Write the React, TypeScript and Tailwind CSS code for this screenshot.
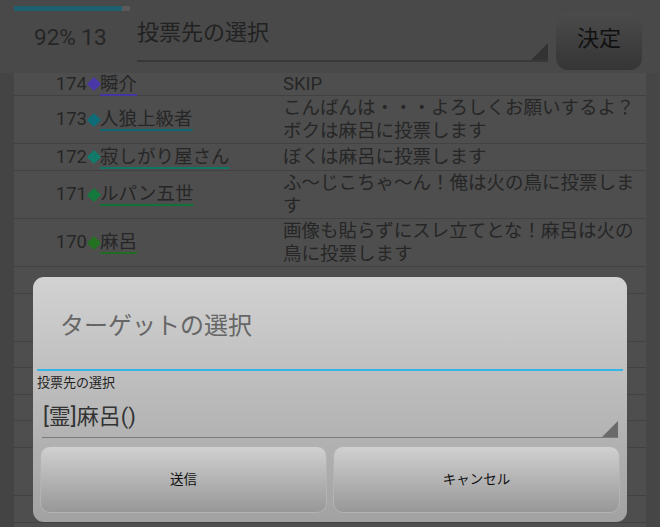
import React from 'react'

const font = { fontFamily: "Roboto, 'Noto Sans CJK JP', sans-serif" }

type Row = {
  no?: string
  name?: string
  color?: string
  msg?: string
  h: string
}

const rows: Row[] = [
  { no: '174', name: '瞬介', color: 'purple', msg: 'SKIP', h: 'h-[23px]' },
  { no: '173', name: '人狼上級者', color: 'teal', msg: 'こんばんは・・・よろしくお願いするよ？ボクは麻呂に投票します', h: 'h-[48px]' },
  { no: '172', name: '寂しがり屋さん', color: 'sea', msg: 'ぼくは麻呂に投票します', h: 'h-[27px]' },
  { no: '171', name: 'ルパン五世', color: 'green', msg: 'ふ〜じこちゃ〜ん！俺は火の鳥に投票します', h: 'h-[48px]' },
  { no: '170', name: '麻呂', color: 'leaf', msg: '画像も貼らずにスレ立てとな！麻呂は火の鳥に投票します', h: 'h-[48px]' },
  { h: 'h-[27px]' },
  { h: 'h-[48px]' },
  { h: 'h-[26px]' },
  { h: 'h-[27px]' },
  { h: 'h-[26px]' },
  { h: 'h-[27px]' },
  { h: 'h-[48px]' },
  { h: 'h-[27px]' },
]

const diamondCls: Record<string, string> = {
  purple: 'bg-[#4a38a8]',
  teal: 'bg-[#0e6b78]',
  sea: 'bg-[#117a68]',
  green: 'bg-[#14793c]',
  leaf: 'bg-[#227222]',
}

const lineCls: Record<string, string> = {
  purple: 'decoration-[#4436a0]',
  teal: 'decoration-[#0d6874]',
  sea: 'decoration-[#0f7664]',
  green: 'decoration-[#127338]',
  leaf: 'decoration-[#206c20]',
}

function Triangle({ size, color }: { size: number; color: string }) {
  return (
    <svg width={size} height={size} viewBox="0 0 10 10" className="block shrink-0">
      <polygon points="10,0 10,10 0,10" fill={color} />
    </svg>
  )
}

function ListRow({ r }: { r: Row }) {
  return (
    <div className={`${r.h} flex items-center border-b border-[#424242] text-[18.5px] leading-[23px] text-[#262626]`}>
      <div className="w-[269px] flex items-center shrink-0">
        {r.no && (
          <>
            <span className="w-[73px] text-right">{r.no}</span>
            <span className={`w-[10px] h-[10px] rotate-45 mx-[1.5px] ${diamondCls[r.color!]}`} />
            <span className={`underline decoration-2 underline-offset-[4px] ${lineCls[r.color!]}`}>{r.name}</span>
          </>
        )}
      </div>
      <div className="w-[360px]">{r.msg}</div>
    </div>
  )
}

export default function App() {
  return (
    <div className="w-[660px] h-[527px] overflow-hidden relative bg-[#464646] flex flex-col" style={font}>
      {/* header */}
      <div className="h-[73px] shrink-0 bg-[#494949] flex flex-col">
        <div className="ml-[14px] mt-[6px] w-[116px] h-[5px] bg-[#5a5a5a] flex">
          <div className="w-[108px] h-full bg-[#1e6070]" />
        </div>
        <div className="flex items-start">
          <div className="ml-[34px] mt-[13px] w-[103px] text-[22.5px] leading-[26px] text-[#262626]">92% 13</div>
          <div className="w-[411px] h-[51px] border-b-2 border-[#383838] flex items-end justify-between">
            <span className="self-start mt-[7px] text-[22px] leading-[30px] text-[#222]">投票先の選択</span>
            <Triangle size={17} color="#333" />
          </div>
          <button className="ml-[8px] mt-[2px] w-[86px] h-[57px] rounded-[12px] bg-linear-to-b from-[#4b4b4b] to-[#353535] text-[22px] text-[#111] flex items-center justify-center pb-[6px]">
            決定
          </button>
        </div>
      </div>

      {/* list */}
      <div className="flex flex-1">
        <div className="w-[14px] bg-[#444444]" />
        <div className="w-[632px] bg-[#4e4e4e] flex flex-col">
          {rows.map((r, i) => (
            <ListRow key={i} r={r} />
          ))}
        </div>
        <div className="w-[14px] bg-[#464646]" />
      </div>

      {/* dialog */}
      <div className="absolute left-[33px] top-[277px] w-[594px] h-[245px] rounded-[11px] bg-linear-to-b from-[#d2d2d2] to-[#a2a2a2] px-[4px] flex flex-col">
        <div className="h-[92px] flex items-center pl-[23px] pt-[6px] text-[24px] text-[#666666]">ターゲットの選択</div>
        <div className="h-[2px] bg-[#33b5e5]" />
        <div className="mt-[4px] h-[16px] text-[13px] leading-[16px] text-[#222]">投票先の選択</div>
        <div className="mx-[5px] h-[47px] border-b border-[#7a7a7a] flex items-end justify-between">
          <span className="self-start mt-[11px] pl-[1px] text-[22px] leading-[30px] text-[#333]">[霊]麻呂()</span>
          <Triangle size={16} color="#6a6a6a" />
        </div>
        <div className="mt-[8px] px-[3px] flex gap-[6px]">
          <button className="w-[287px] h-[67px] rounded-[10px] border border-[#b3b3b3] bg-linear-to-b from-[#d0d0d0] to-[#989898] text-[13.5px] text-[#111] flex items-center justify-center">
            送信
          </button>
          <button className="w-[287px] h-[67px] rounded-[10px] border border-[#b3b3b3] bg-linear-to-b from-[#d0d0d0] to-[#989898] text-[13.5px] text-[#111] flex items-center justify-center">
            キャンセル
          </button>
        </div>
      </div>
    </div>
  )
}
